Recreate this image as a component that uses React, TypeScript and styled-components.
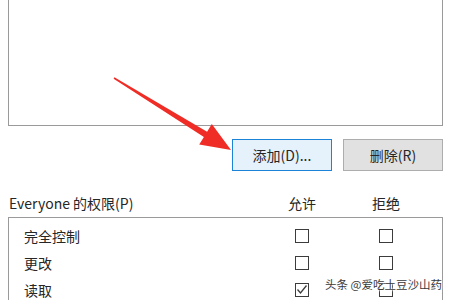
import React from "react";
import styled, { createGlobalStyle } from "styled-components";

const Global = createGlobalStyle`
  html, body { margin: 0; padding: 0; background: #fff; }
  body {
    font-family: "Noto Sans CJK SC", "Noto Sans", sans-serif;
    color: #262626;
    overflow: hidden;
  }
`;

const Page = styled.div`
  position: relative;
  width: 450px;
  height: 300px;
  overflow: hidden;
  padding: 0 7px 0 8px;
  box-sizing: border-box;
  display: flex;
  flex-direction: column;
`;

const ListBox = styled.div`
  height: 126px;
  flex-shrink: 0;
  box-sizing: border-box;
  border: 1px solid #9a9a9a;
  border-top: none;
  background: #fff;
`;

const ButtonRow = styled.div`
  display: flex;
  justify-content: flex-end;
  gap: 11px;
  margin-top: 13px;
`;

const Button = styled.div<{ $primary?: boolean }>`
  width: 100px;
  height: 32px;
  box-sizing: border-box;
  display: flex;
  align-items: center;
  justify-content: center;
  font-size: 14px;
  color: #262626;
  background: ${(p) => (p.$primary ? "#e5f1fb" : "#e1e1e1")};
  border: 1px solid ${(p) => (p.$primary ? "#1b84d9" : "#adadad")};
`;

const HeaderRow = styled.div`
  display: grid;
  grid-template-columns: 279px 30px 54px 30px;
  align-items: center;
  margin-top: 22px;
  height: 20px;
  font-size: 14px;
`;

const HeaderLabel = styled.div`
  padding-left: 1px;
  white-space: nowrap;
`;

const ColHead = styled.div<{ $col: number }>`
  grid-column: ${(p) => p.$col};
  text-align: center;
  white-space: nowrap;
`;

const PermBox = styled.div`
  margin-top: 4px;
  border: 1px solid #9a9a9a;
  border-bottom: none;
  padding-top: 4px;
  flex: 1;
`;

const PermRow = styled.div`
  display: grid;
  grid-template-columns: 278px 30px 54px 30px;
  align-items: center;
  height: 27px;
  font-size: 14px;
`;

const PermName = styled.div`
  padding-left: 15px;
`;

const BoxCell = styled.div<{ $col: number }>`
  grid-column: ${(p) => p.$col};
  display: flex;
  justify-content: center;
`;

const Check = styled.div`
  width: 14px;
  height: 14px;
  box-sizing: border-box;
  border: 1px solid #3c3c3c;
  background: #fff;
  display: flex;
  align-items: center;
  justify-content: center;
`;

const ArrowLayer = styled.svg`
  position: absolute;
  left: 0;
  top: 0;
  pointer-events: none;
`;

const Watermark = styled.div`
  position: absolute;
  left: 325px;
  top: 276px;
  font-size: 11.5px;
  color: #3a3a3a;
  white-space: nowrap;
  text-shadow: 0 0 2px #fff, 0 0 2px #fff, 0 0 3px #fff;
`;

const perms = [
  { name: "完全控制", allow: false, deny: false },
  { name: "更改", allow: false, deny: false },
  { name: "读取", allow: true, deny: false },
];

const CheckBox: React.FC<{ checked: boolean }> = ({ checked }) => (
  <Check>
    {checked && (
      <svg width="12" height="12" viewBox="0 0 12 12">
        <polyline points="1.5,5.5 4.5,9 10.5,1.5" fill="none" stroke="#3c3c3c" strokeWidth="1.3" />
      </svg>
    )}
  </Check>
);

export default function App() {
  return (
    <>
      <Global />
      <Page>
        <ListBox />
        <ButtonRow>
          <Button $primary>添加(D)...</Button>
          <Button>删除(R)</Button>
        </ButtonRow>
        <HeaderRow>
          <HeaderLabel>Everyone 的权限(P)</HeaderLabel>
          <ColHead $col={2}>允许</ColHead>
          <ColHead $col={4}>拒绝</ColHead>
        </HeaderRow>
        <PermBox>
          {perms.map((p) => (
            <PermRow key={p.name}>
              <PermName>{p.name}</PermName>
              <BoxCell $col={2}>
                <CheckBox checked={p.allow} />
              </BoxCell>
              <BoxCell $col={4}>
                <CheckBox checked={p.deny} />
              </BoxCell>
            </PermRow>
          ))}
        </PermBox>
        <ArrowLayer width="450" height="300" viewBox="0 0 450 300">
          <polygon
            points="114.4,77.3 207.1,131.7 211.8,124.1 231,150 199.2,144.5 203.9,136.9 113.6,78.7"
            fill="#ef2d26"
          />
        </ArrowLayer>
        <Watermark>头条 @爱吃土豆沙山药</Watermark>
      </Page>
    </>
  );
}
